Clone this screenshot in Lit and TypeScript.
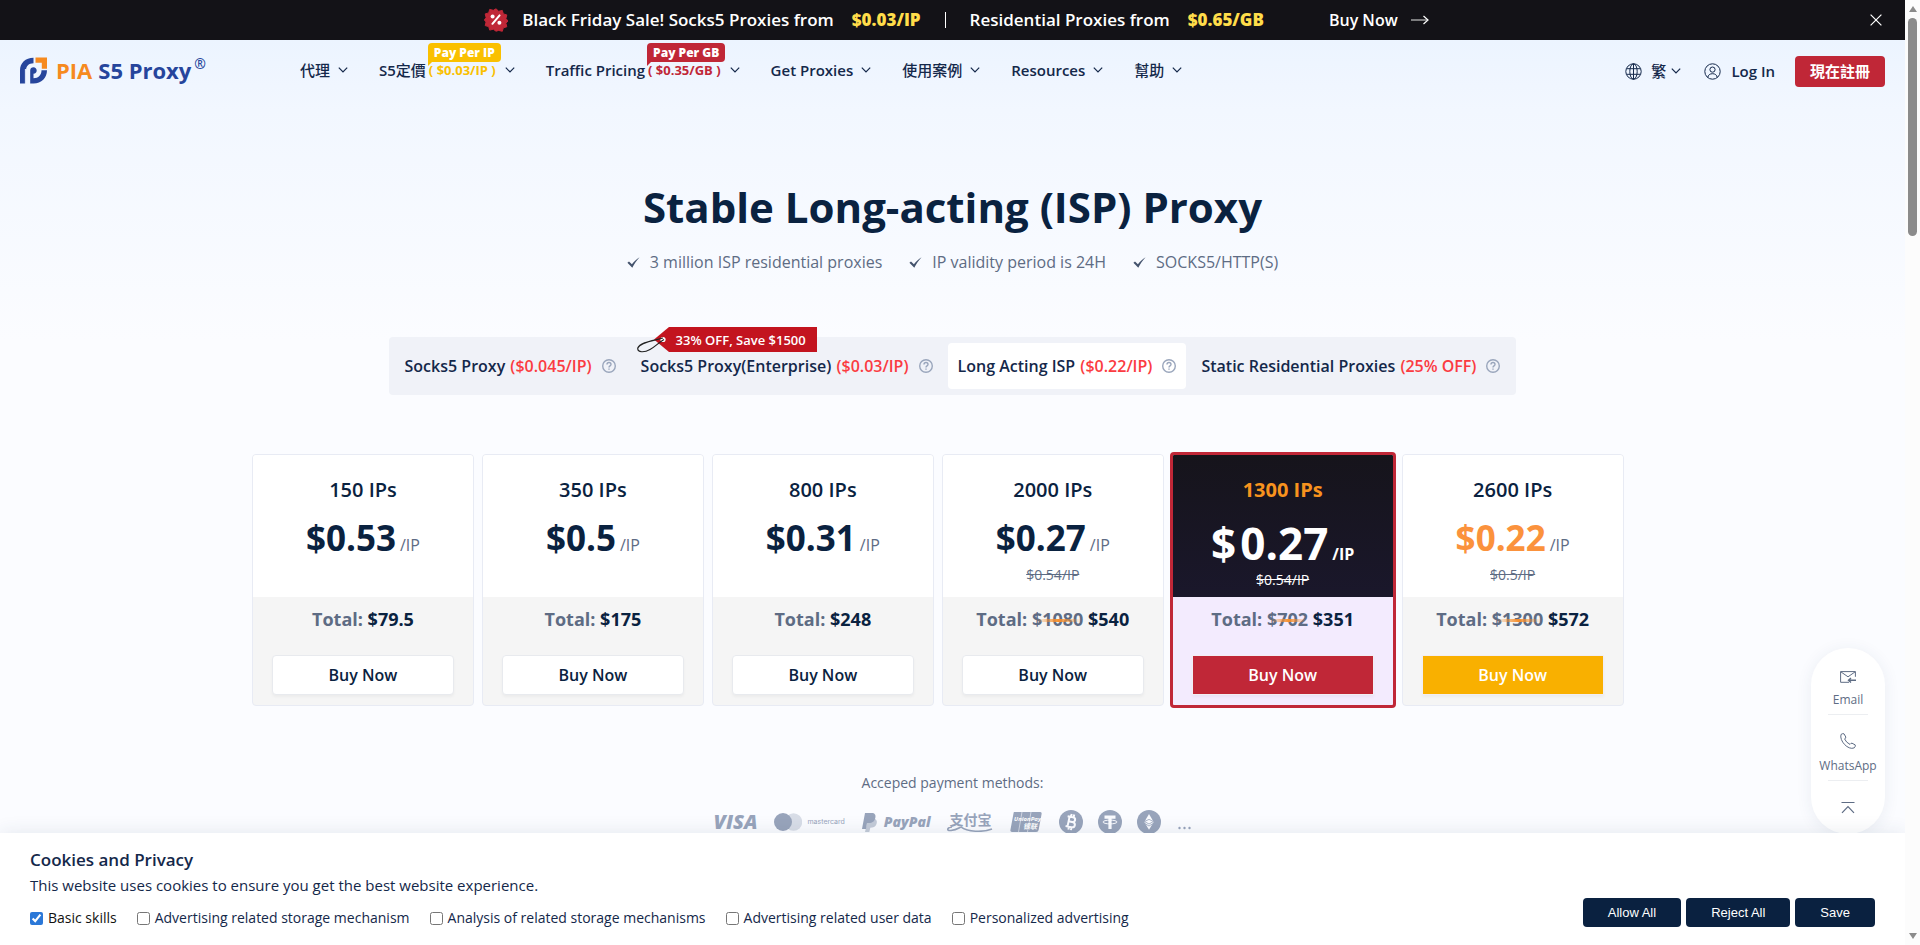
import { LitElement, html, svg, css, nothing } from "lit";
import { customElement, property, state } from "lit/decorators.js";
import { classMap } from "lit/directives/class-map.js";

const chevron = html`<svg class="chev" width="10" height="6" viewBox="0 0 10 6" fill="none" stroke="currentColor" stroke-width="1.2" aria-hidden="true"><path d="M.8.6 5 5 9.2.6" /></svg>`;

const closeIcon = html`<svg width="12" height="12" viewBox="0 0 12 12" stroke="#fff" stroke-width="1.2" aria-hidden="true"><path d="M.6.6l10.8 10.8M11.4.6.6 11.4" /></svg>`;

const saleIcon = html`<svg width="24" height="24" viewBox="0 0 24 24" aria-hidden="true">
  <path fill="#c02737" stroke="#c02737" stroke-width="1" stroke-linejoin="round" d="M12 .8l2.7 2.5 3.6-.9 1 3.5 3.5 1-.9 3.6 2.1 2.5-2.1 2.2.9 3.6-3.5 1-1 3.5-3.6-.9L12 23.2l-2.7-2-3.6.9-1-3.5-3.5-1 .9-3.6L.4 12l1.700-2.500-.9-3.600 3.500-1 1-3.500 3.600.9z" />
  <path d="M15.600 7.400l-7.200 8.400" stroke="#fff" stroke-width="2" stroke-linecap="round" />
  <circle cx="8.600" cy="8.600" r="2" fill="#fff" /><circle cx="15.400" cy="14.800" r="2" fill="#fff" />
</svg>`;

const arrowIcon = html`<svg width="18" height="10" viewBox="0 0 18 10" fill="none" aria-hidden="true"><path d="M0 5h16" stroke="#aaa" stroke-width="1.400" /><path d="M12.500 1 17 5l-4.500 4" stroke="#fff" stroke-width="1.200" /></svg>`;

const logoMark = html`<svg width="27" height="27" viewBox="0 0 27 27" aria-hidden="true">
  <path fill="#26459c" d="M0 26.500V13.500C0 6 5.500.8 13.500.8v5.400C8.800 6.200 6 9 6 13.500v13z" />
  <path fill="#26459c" d="M21.500 13.300c0 4.700-3 8-8 8v-4.600c2 0 3.200-1.300 3.200-3.200s-1.400-3.200-3.200-3.200-3.300 1.200-3.300 3.200v13h3.300C21.500 26.500 27 21 27 13.300z" />
  <path fill="#f68a1f" d="M15.500.5H27v11.200h-5.200V5.800h-6.300z" />
  <path d="M5.400 12v15" stroke="#eef5ff" stroke-width="1" />
</svg>`;

const globeIcon = html`<svg width="17" height="17" viewBox="0 0 17 17" fill="none" stroke="#14284a" stroke-width="1" aria-hidden="true"><circle cx="8.500" cy="8.500" r="7.700" /><ellipse cx="8.500" cy="8.500" rx="3.700" ry="7.700" /><path d="M8.500.8v15.400M1.500 5.700h14M1.500 11.300h14" /></svg>`;

const userIcon = html`<svg width="17" height="17" viewBox="0 0 17 17" fill="none" stroke="#14284a" stroke-width="1" aria-hidden="true"><circle cx="8.500" cy="8.500" r="7.700" /><circle cx="8.500" cy="6.600" r="2.600" /><path d="M3.800 14.400c.4-2.400 2-3.700 4.700-3.700s4.300 1.300 4.700 3.700" /></svg>`;

const tickIcon = html`<svg width="13" height="11" viewBox="0 0 13 11" aria-hidden="true"><path fill="#44536d" d="M.4 5.800 2 4.600l2.900 2.600C7 4.400 9.500 2 12.600.2 9.600 3.400 7.200 6.900 5.300 10.800z" /></svg>`;

const helpIcon = html`<svg width="14" height="14" viewBox="0 0 14 14" fill="none" stroke="#9aa6bc" stroke-width="1.400" aria-hidden="true"><circle cx="7" cy="7" r="6.300" /><path d="M5 5.600c0-1.300.9-2.100 2-2.100s2 .8 2 1.900c0 1.500-2 1.500-2 3" /><path d="M7 9.600v1.200" /></svg>`;

@customElement("top-banner")
export class TopBanner extends LitElement {
  static styles = css`
    :host { display: block; background: #131217; color: #fff; font: 600 17px/40px "Open Sans", sans-serif; }
    .row { display: grid; grid-template-columns: 1fr auto 1fr; align-items: center; height: 40px; padding-left: 8px; }
    .deal { grid-column: 2; display: flex; align-items: center; }
    .sale { display: flex; margin-right: 14px; }
    .price { margin-left: 18px; color: #ffdd4a; font-weight: 800; }
    .sep { width: 1px; height: 16px; margin: 0 24px; background: #fff; }
    .buy { display: flex; align-items: center; gap: 13px; margin-left: 65px; color: #fff; font-size: 16px; text-decoration: none; }
    .close { justify-self: end; display: flex; margin-right: 23px; padding: 0; border: 0; background: none; cursor: pointer; }
  `;
  render() {
    return html`<div class="row">
      <div class="deal">
        <span class="sale">${saleIcon}</span>
        <span>Black Friday Sale! Socks5 Proxies from</span><span class="price">$0.03/IP</span>
        <span class="sep"></span>
        <span>Residential Proxies from</span><span class="price">$0.65/GB</span>
        <a class="buy" href="#buy">Buy Now ${arrowIcon}</a>
      </div>
      <button class="close" aria-label="Close">${closeIcon}</button>
    </div>`;
  }
}

interface NavItem { label?: string; han?: string; price?: string; badge?: string; tone?: string; }

@customElement("site-header")
export class SiteHeader extends LitElement {
  static styles = css`
    :host { display: block; font: 600 15px/24px "Open Sans", "Noto Sans CJK TC", sans-serif; color: #14284a; }
    .bar { display: flex; align-items: center; height: 62px; padding: 0 20px; }
    a { color: inherit; text-decoration: none; }
    .logo { display: flex; align-items: center; gap: 9px; width: 280px; padding-bottom: 2px; font: 700 22px/28px "Open Sans", sans-serif; color: #26459c; white-space: nowrap; }
    .name { display: flex; gap: 6px; }
    .pia { color: #f68a1f; }
    .mark { display: flex; }
    .reg { margin-left: -3px; font-size: 14px; line-height: 16px; font-weight: 600; }
    .nav { display: flex; flex: 1; gap: 31px; padding-bottom: 2px; }
    .item { display: flex; align-items: center; gap: 8px; white-space: nowrap; }
    .label { display: flex; align-items: center; }
    .han { font-weight: 500; }
    .deal { position: relative; margin: 0 1px 0 3px; font-size: 13px; font-weight: 700; }
    .badge { position: absolute; left: -1px; bottom: 20px; padding: 0 6px; border-radius: 4px 4px 4px 0; color: #fff; font-size: 12px; line-height: 19px; font-weight: 800; }
    .badge::after { content: ""; position: absolute; left: 0; top: 19px; border: 2px solid transparent; border-left-color: currentColor; border-top-color: currentColor; }
    .yellow, .yellow .badge::after { color: #fac000; }
    .yellow .badge { background: #fac000; }
    .red, .red .badge::after { color: #c02737; }
    .red .badge { background: #c02737; }
    .tools { display: flex; align-items: center; }
    .lang { display: flex; align-items: center; gap: 5px; padding: 0; border: 0; background: none; color: inherit; font: inherit; }
    .lang svg:first-child { margin-right: 4px; }
    .login { display: flex; align-items: center; gap: 10px; margin: 0 20px 0 23px; }
    .join { min-width: 90px; height: 31px; padding: 0 14px; border: 0; border-radius: 4px; background: #c02737; color: #fff; font: inherit; font-weight: 700; }
  `;
  private items: NavItem[] = [
    { han: "代理" },
    { label: "S5", han: "定價", price: "( $0.03/IP )", badge: "Pay Per IP", tone: "yellow" },
    { label: "Traffic Pricing", price: "( $0.35/GB )", badge: "Pay Per GB", tone: "red" },
    { label: "Get Proxies" },
    { han: "使用案例" },
    { label: "Resources" },
    { han: "幫助" },
  ];
  render() {
    return html`<header class="bar">
      <a class="logo" href="#home"><span class="mark">${logoMark}</span><span class="name"><span class="pia">PIA</span><span>S5 Proxy</span><span class="reg">®</span></span></a>
      <nav class="nav">
        ${this.items.map((i) => html`<a class="item" href="#nav">
          <span class="label">${i.label ?? nothing}${i.han ? html`<span class="han">${i.han}</span>` : nothing}${i.price
            ? html`<span class="deal ${i.tone}">${i.price}<span class="badge">${i.badge}</span></span>`
            : nothing}</span>${chevron}</a>`)}
      </nav>
      <div class="tools">
        <button class="lang">${globeIcon}<span class="han">繁</span>${chevron}</button>
        <a class="login" href="#login">${userIcon}Log In</a>
        <button class="join">現在註冊</button>
      </div>
    </header>`;
  }
}

@customElement("product-tabs")
export class ProductTabs extends LitElement {
  static styles = css`
    :host { display: block; width: fit-content; margin: 0 auto; }
    .tabs { display: flex; gap: 5px; padding: 6px; border-radius: 4px; background: #f0f2f8; }
    .tab { position: relative; display: flex; align-items: center; gap: 10px; height: 46px; padding: 0 10px; border: 0; border-radius: 4px; background: none; color: #14284a; font: 600 16px/24px "Open Sans", sans-serif; white-space: nowrap; }
    .tab svg { flex: none; }
    .active { background: #fff; }
    .price { margin-left: 1px; color: #fb3b41; }
    .tag { position: absolute; left: 6px; top: -17px; display: block; }
    .tagtext { position: absolute; left: 45px; top: -15px; color: #fff; font-size: 13px; line-height: 24px; }
  `;
  @state() private active = 2;
  private tabs = [
    { name: "Socks5 Proxy", price: "($0.045/IP)" },
    { name: "Socks5 Proxy(Enterprise)", price: "($0.03/IP)", tag: "33% OFF, Save $1500" },
    { name: "Long Acting ISP", price: "($0.22/IP)" },
    { name: "Static Residential Proxies", price: "(25% OFF)" },
  ];
  render() {
    return html`<div class="tabs" role="tablist">
      ${this.tabs.map((t, n) => html`<button role="tab" aria-selected=${n === this.active} class=${classMap({ tab: true, active: n === this.active })} @click=${() => (this.active = n)}>
        <span>${t.name} <span class="price">${t.price}</span></span>${helpIcon}
        ${t.tag ? html`<svg class="tag" width="181" height="29" viewBox="0 0 181 29" aria-hidden="true">
            <path fill="#c3141f" d="M32 1h148v25H32L17 13.500z" />
            <circle cx="26" cy="13.500" r="2.600" fill="#fff" />
            <path d="M26 12C18 14.500 3 16 .8 22c-.7 5 7 4.500 12.200 1.500C18.500 20.500 21 17 27 13.500" fill="none" stroke="#222" stroke-width="1.200" />
          </svg><span class="tagtext">${t.tag}</span>` : nothing}
      </button>`)}
    </div>`;
  }
}

@customElement("plan-card")
export class PlanCard extends LitElement {
  static styles = css`
    :host { display: grid; min-width: 0; font-family: "Open Sans", sans-serif; color: #0a2240; }
    .card { display: flex; flex-direction: column; box-sizing: border-box; border: 1px solid #e8ebf4; border-radius: 4px; overflow: hidden; background: #f5f5f5; }
    .top { height: 142px; padding-top: 20px; box-sizing: border-box; background: #fff; text-align: center; }
    .title { margin: 0; font-size: 20px; line-height: 30px; font-weight: 600; }
    .price { display: flex; justify-content: center; align-items: baseline; gap: 4px; margin-top: 7px; font-size: 35px; line-height: 52px; font-weight: 700; }
    .unit { font-size: 16px; line-height: 24px; font-weight: 400; color: #5e6c84; }
    .was { display: block; font-size: 14px; line-height: 22px; color: #5e6c84; }
    .bottom { display: flex; flex-direction: column; gap: 18px; padding: 4px 19px 10px; }
    .total { text-align: center; font-size: 18px; line-height: 36px; font-weight: 700; color: #0a2240; }
    .grey { color: #5e6c84; }
    .old { position: relative; color: #5e6c84; text-decoration: none; }
    .old::after { content: ""; position: absolute; left: 4px; right: 2px; top: 50%; height: 3px; background: linear-gradient(90deg, #fba54a00, #f7902e, #fba54a00); }
    .buy { height: 40px; border: 1px solid #e8eaee; border-radius: 4px; background: #fff; box-shadow: 0 2px 3px #0000000a; color: #0a2240; font: 600 16px/24px "Open Sans", sans-serif; }
    .hot .top { background: linear-gradient(#16141b, #1a172b); color: #fff; }
    .hot { margin: -2px; border: 3px solid #c02737; background: #f3ebfe; }
    .hot .title { color: #f7931e; font-weight: 700; }
    .hot .price { margin-top: 12px; font-size: 44px; }
    .hot .unit { color: #fff; font-weight: 700; }
    .hot .was { color: #fff; }
    .hot .buy { background: #c02737; }
    .gold .price { color: #fb923c; }
    .gold .buy { background: #f9b000; }
    .hot .buy, .gold .buy { border: 1px solid #f2eef3; border-radius: 0; color: #fff; }
  `;
  @property() ips = "";
  @property() price = "";
  @property() was = "";
  @property() oldTotal = "";
  @property() total = "";
  @property() kind = "";
  render() {
    const hot = this.kind === "hot";
    return html`<section class="card ${this.kind}">
      <div class="top">
        <h2 class="title">${this.ips} IPs</h2>
        <div class="price">${hot ? html`<span>$</span><span>${this.price}</span>` : html`<span>$${this.price}</span>`}<span class="unit">/IP</span></div>
        ${this.was ? html`<s class="was">$${this.was}/IP</s>` : nothing}
      </div>
      <div class="bottom">
        <div class="total"><span class="grey">Total:</span> ${this.oldTotal ? html`<s class="old">$${this.oldTotal}</s> ` : nothing}$${this.total}</div>
        <button class="buy">Buy Now</button>
      </div>
    </section>`;
  }
}

@customElement("payment-methods")
export class PaymentMethods extends LitElement {
  static styles = css`
    :host { display: block; font-family: "Open Sans", sans-serif; text-align: center; color: #5e6c84; }
    .caption { margin: 0; font-size: 14px; line-height: 22px; }
    .list { display: flex; justify-content: center; align-items: center; gap: 17px; height: 24px; margin-top: 16px; color: #98a4bb; }
    .item { display: flex; align-items: center; white-space: nowrap; }
    .visa { font: italic 800 20px/24px "Open Sans", sans-serif; }
    .master { gap: 5px; font: 400 7px/12px "Inter", sans-serif; }
    .paypal { gap: 7px; font: italic 800 14px/20px "Open Sans", sans-serif; }
    .alipay { flex-direction: column; font: 700 14px/15px "Noto Sans CJK SC", sans-serif; }
    .coins { display: flex; gap: 15px; }
    .item svg, .coins svg { display: block; flex: none; }
    .union { font-family: "Open Sans", "Noto Sans CJK SC", sans-serif; font-style: italic; font-weight: 700; }
    .dots { display: flex; align-self: end; }
  `;
  render() {
    const coin = (inner: unknown) => html`<svg width="24" height="24" viewBox="0 0 24 24" aria-hidden="true"><circle cx="12" cy="12" r="12" fill="#98a4bb" />${inner}</svg>`;
    return html`<p class="caption">Acceped payment methods:</p>
      <div class="list">
        <span class="item visa">VISA</span>
        <span class="item master"><svg width="28" height="18" viewBox="0 0 28 18" aria-hidden="true"><circle cx="19.500" cy="9" r="8.700" fill="#d8dde7" /><circle cx="9" cy="9" r="9" fill="#98a4bb" /></svg>mastercard</span>
        <span class="item paypal"><svg width="15" height="19" viewBox="0 0 15 19" aria-hidden="true"><path fill="#c4cbd8" d="M6 6h7c2 1 2.300 3 1.300 5.500-1 2.400-3 3.300-6 3.300l-1 4.200H3z" /><path fill="#98a4bb" d="M3 0h6.500C13 0 14 2 13.300 5c-.8 3.600-3 5-6.300 5H5L4 16H0z" /></svg>PayPal</span>
        <span class="item alipay">支付宝<svg width="46" height="5" viewBox="0 0 46 5" fill="none" stroke="#98a4bb" stroke-width="1.600" aria-hidden="true"><path d="M5 0C0 .5-1 4 4 3.500 9 3 11 1.500 14 0c6 5 22 5.500 31 2" /></svg></span>
        <svg class="union" width="32" height="20" viewBox="0 0 32 20" aria-hidden="true"><path fill="#98a4bb" d="M4 0h26q2 0 1.600 2l-3 16q-.4 2-2.400 2H2q-2 0-1.600-2l3-16q.3-2 .6-2z" /><path d="M12 0 8.500 20M21 0l-3.500 20" stroke="#e6eaf1" stroke-width=".7" /><text x="4" y="9" fill="#fff" font-size="6">UnionPay</text><text x="13" y="17" fill="#fff" font-size="7">银联</text></svg>
        <span class="coins">
          ${coin(svg`<path transform="rotate(12 12 12)" fill="none" stroke="#fbfcff" stroke-width="2" d="M7.500 7H13q2.600 0 2.600 2.400T13 11.800H9.500M9.500 7v10M7.500 17h6q2.900 0 2.900-2.600t-2.900-2.600M11 4v3M13.600 4v3M11 17v3M13.600 17v3" />`)}
          ${coin(svg`<path fill="#fbfcff" d="M6.500 5.500h11v3.200h-3.900V19h-3.200V8.700H6.500z" /><ellipse cx="12" cy="12" rx="7" ry="1.900" fill="none" stroke="#fbfcff" />`)}
          ${coin(svg`<path fill="#fbfcff" d="M12 4l4.700 8-4.700 7.800L7.300 12z" /><path d="M7.500 11.500 12 9.400l4.500 2.100L12 14zM7 13l5 3 5-3" fill="none" stroke="#98a4bb" stroke-width=".8" />`)}
        </span>
        <span class="dots"><svg width="13" height="8" viewBox="0 0 13 8" fill="#98a4bb" aria-hidden="true"><circle cx="1.500" cy="2" r="1.200" /><circle cx="6.500" cy="2" r="1.200" /><circle cx="11.500" cy="2" r="1.200" /></svg></span>
      </div>`;
  }
}

@customElement("contact-dock")
export class ContactDock extends LitElement {
  static styles = css`
    :host { display: flex; flex-direction: column; align-items: center; box-sizing: border-box; width: 74px; padding: 23px 0 20px; border-radius: 37px; background: #fff; box-shadow: 0 2px 16px #25406b14; font: 400 12px/16px "Open Sans", sans-serif; }
    .link { display: flex; flex-direction: column; align-items: center; gap: 9px; color: #5e6c84; text-decoration: none; }
    .line { width: 40px; height: 1px; margin: 6px 0 18px; background: #eceef1; }
    .up { display: flex; margin-top: 2px; padding: 0; border: 0; background: none; }
  `;
  render() {
    return html`
      <a class="link" href="#email"><svg width="16" height="12" viewBox="0 0 16 12" fill="none" stroke="#5e6c84" aria-hidden="true"><path d="M9 11.300H.6V.6h14.800v5.200M.8.800 8 5.800 15.200.8" /><path d="M8.500 9.200H16M11 6.900 8.500 9.200l2.500 2.300" stroke-width="1.400" /></svg>Email</a>
      <span class="line"></span>
      <a class="link" href="#whatsapp"><svg width="16" height="16" viewBox="0 0 16 16" fill="none" stroke="#5e6c84" aria-hidden="true"><path d="M1 1.500Q2.500.2 4 .8L5.800 4q.2 1-1.200 2 1.600 3.600 5.400 5.400 1-1.500 2-1.200l3.200 1.700q.7 1.200-1 3C8 17.500-.8 7.800 1 1.500z" /></svg>WhatsApp</a>
      <span class="line"></span>
      <button class="up" aria-label="Back to top"><svg width="14" height="13" viewBox="0 0 14 13" fill="none" stroke="#5e6c84" stroke-width="1.200" aria-hidden="true"><path d="M.5 1.500h13M1 11.800 7 5.500l6 6.300" /></svg></button>`;
  }
}

@customElement("cookie-bar")
export class CookieBar extends LitElement {
  static styles = css`
    :host { display: flex; justify-content: space-between; align-items: end; box-sizing: border-box; padding: 14px 30px 17px; background: #fff; box-shadow: 0 0 18px #2540661c; color: #14284a; font: 400 15px/25px "Open Sans", sans-serif; }
    .title { margin: 0; font-size: 17px; line-height: 26px; font-weight: 600; }
    .text { margin: 0; }
    .options { display: flex; gap: 20px; margin-top: 10px; font-size: 14px; line-height: 20px; }
    .option { display: flex; align-items: center; gap: 5px; }
    .option input { width: 13px; height: 13px; margin: 0; accent-color: #2b78d8; }
    .first { color: #111; }
    .actions { display: flex; gap: 5px; padding-bottom: 1px; }
    .btn { height: 29px; padding: 0 25px; border: 0; border-radius: 4px; background: #0a2140; color: #fff; font: 400 13px/20px "Liberation Sans", sans-serif; }
  `;
  private options = ["Basic skills", "Advertising related storage mechanism", "Analysis of related storage mechanisms", "Advertising related user data", "Personalized advertising"];
  render() {
    return html`<div>
        <h2 class="title">Cookies and Privacy</h2>
        <p class="text">This website uses cookies to ensure you get the best website experience.</p>
        <div class="options">${this.options.map((o, n) => html`<label class=${classMap({ option: true, first: n === 0 })}><input type="checkbox" ?checked=${n === 0} />${o}</label>`)}</div>
      </div>
      <div class="actions"><button class="btn">Allow All</button><button class="btn">Reject All</button><button class="btn">Save</button></div>`;
  }
}

@customElement("app-root")
export class AppRoot extends LitElement {
  static styles = css`
    :host { display: grid; grid-template-columns: 1fr 15px; height: 100vh; overflow: hidden; font-family: "Open Sans", sans-serif; color: #0a2240; }
    .page { position: relative; min-width: 0; overflow: hidden; background: linear-gradient(#ecf4ff 40px, #f2f7ff 110px, #fbfcff 340px); }
    .hero { padding-top: 75px; text-align: center; }
    .heading { margin: 0; font-size: 42px; line-height: 60px; font-weight: 700; }
    .points { display: flex; justify-content: center; gap: 27px; margin: 13px 0 0; padding: 0; list-style: none; font-size: 16px; line-height: 24px; color: #5e6c84; }
    .point { display: flex; align-items: center; gap: 10px; }
    .tabs { margin-top: 63px; }
    .plans { display: grid; grid-template-columns: repeat(6, minmax(0, 1fr)); gap: 8px; width: 72%; margin: 59px auto 0 252px; }
    .pay { margin-top: 66px; }
    .dock { position: absolute; right: 20px; bottom: 111px; }
    .cookies { position: absolute; left: 0; right: 0; bottom: 0; }
    .scroll { display: flex; flex-direction: column; align-items: center; justify-content: space-between; background: #fcfcfc; padding: 6px 0; }
    .head { display: flex; flex-direction: column; align-items: center; gap: 6px; }
    .thumb { width: 9px; height: 218px; border-radius: 5px; background: #8b8b8b; }
  `;
  private plans = [
    { ips: "150", price: "0.53", was: "", old: "", total: "79.5", kind: "" },
    { ips: "350", price: "0.5", was: "", old: "", total: "175", kind: "" },
    { ips: "800", price: "0.31", was: "", old: "", total: "248", kind: "" },
    { ips: "2000", price: "0.27", was: "0.54", old: "1080", total: "540", kind: "" },
    { ips: "1300", price: "0.27", was: "0.54", old: "702", total: "351", kind: "hot" },
    { ips: "2600", price: "0.22", was: "0.5", old: "1300", total: "572", kind: "gold" },
  ];
  render() {
    return html`<div class="page">
        <top-banner></top-banner>
        <site-header></site-header>
        <main>
          <div class="hero">
            <h1 class="heading">Stable Long-acting (ISP) Proxy</h1>
            <ul class="points">${["3 million ISP residential proxies", "IP validity period is 24H", "SOCKS5/HTTP(S)"].map((p) => html`<li class="point">${tickIcon}${p}</li>`)}</ul>
          </div>
          <product-tabs class="tabs"></product-tabs>
          <div class="plans">${this.plans.map((p) => html`<plan-card .ips=${p.ips} .price=${p.price} .was=${p.was} .oldTotal=${p.old} .total=${p.total} .kind=${p.kind}></plan-card>`)}</div>
          <payment-methods class="pay"></payment-methods>
        </main>
        <contact-dock class="dock"></contact-dock>
        <cookie-bar class="cookies"></cookie-bar>
      </div>
      <div class="scroll" aria-hidden="true">
        <div class="head"><svg width="8" height="6" viewBox="0 0 8 6" fill="#8b8b8b"><path d="M4 0l4 6H0z" /></svg><div class="thumb"></div></div>
        <svg width="8" height="6" viewBox="0 0 8 6" fill="#8b8b8b"><path d="M4 6 0 0h8z" /></svg>
      </div>`;
  }
}
